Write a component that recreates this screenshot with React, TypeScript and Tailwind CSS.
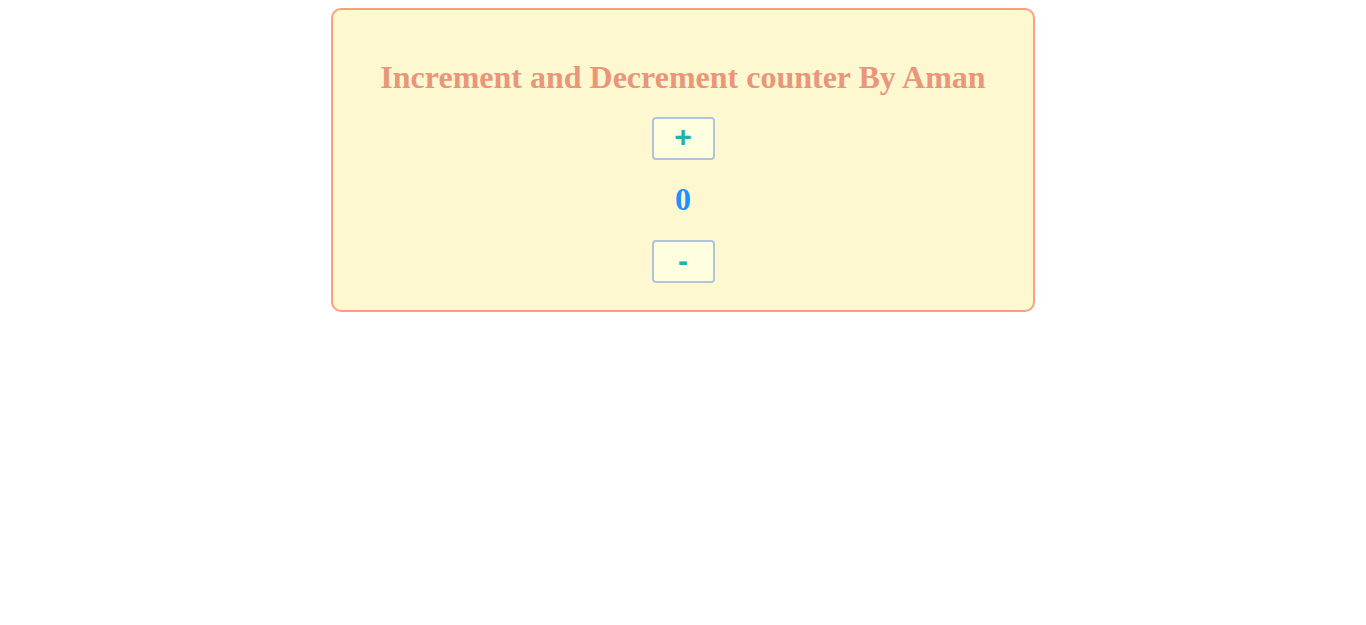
import React, { useState } from "react";

export default function App() {
  const [count, setCount] = useState(0);
  return (
    <div className="min-h-[625px] bg-white pt-2 font-['Liberation_Serif',serif]">
      <div className="mx-auto flex w-[704px] flex-col items-center rounded-[10px] border-2 border-[#ffa07a] bg-[#fef8d0] pt-[50px] pb-[27px]">
        <h1 className="text-[32px] font-bold leading-[35px] text-[#e9967a]">
          Increment and Decrement counter By Aman
        </h1>
        <button
          onClick={() => setCount(count + 1)}
          className="mt-[22px] flex h-[43px] w-[63px] items-center justify-center rounded-[4px] border-2 border-[#b0c4de] bg-[#ffffe0] pb-[3px] font-['Liberation_Sans',Arial,sans-serif] text-[30px] font-bold leading-none text-[#20b2aa]"
        >
          +
        </button>
        <div className="mt-[22px] text-[32px] font-bold leading-[35px] text-[#1e90ff]">{count}</div>
        <button
          onClick={() => setCount(count - 1)}
          className="mt-[23px] flex h-[43px] w-[63px] items-center justify-center rounded-[4px] border-2 border-[#b0c4de] bg-[#ffffe0] pb-[1px] font-['Liberation_Sans',Arial,sans-serif] text-[30px] font-bold leading-none text-[#20b2aa]"
        >
          -
        </button>
      </div>
    </div>
  );
}
